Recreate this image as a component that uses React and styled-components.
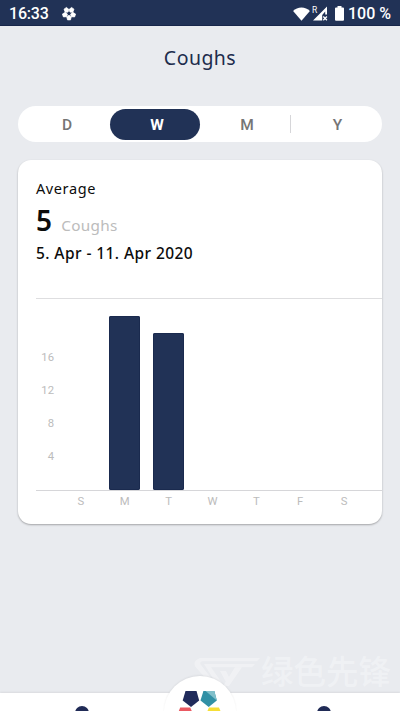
import styled, { createGlobalStyle } from 'styled-components';

const NAVY = '#213256';

const GlobalStyle = createGlobalStyle`
    * {
        box-sizing: border-box;
    }

    body {
        margin: 0;
        background: #e9ebef;
        font-family: Roboto, sans-serif;
    }
`;

const Screen = styled.div`
    display: flex;
    flex-direction: column;
    width: 400px;
    height: 711px;
    overflow: hidden;
    background: #e9ebef;
`;

const StatusBar = styled.header`
    display: flex;
    align-items: center;
    flex: none;
    height: 26px;
    padding: 2px 9px 0;
    background: ${NAVY};
    border-bottom: 1px solid #17264a;
    color: #fff;
    font-size: 16px;
    font-weight: 500;

    svg {
        display: block;
        flex: none;
    }
`;

const Clock = styled.span`
    margin-right: 12px;
    letter-spacing: -0.2px;
`;

const StatusIcons = styled.div`
    display: flex;
    align-items: center;
    margin-left: auto;
    margin-right: 4px;

    svg + svg {
        margin-left: 3px;
    }

    svg:last-child {
        margin-left: 7px;
    }
`;

const Title = styled.h1`
    flex: none;
    height: 80px;
    margin: 0;
    padding-top: 18px;
    color: #202b4c;
    font: 400 19.5px/28px 'Noto Sans', sans-serif;
    letter-spacing: 0.45px;
    text-align: center;
`;

const Segments = styled.nav`
    display: grid;
    grid-template-columns: repeat(4, 90px);
    justify-content: center;
    align-items: center;
    flex: none;
    height: 36px;
    margin: 0 18px;
    border-radius: 18px;
    background: #fff;
`;

const Segment = styled.button`
    height: 31px;
    padding: 1px 0 0 4px;
    border: 0;
    border-radius: 15.5px;
    background: ${({ $active }) => ($active ? NAVY : 'transparent')};
    color: ${({ $active }) => ($active ? '#fff' : '#757575')};
    font: ${({ $active }) => ($active ? 700 : 500)} 15.5px Roboto, sans-serif;
`;

const LastSegment = styled(Segment)`
    height: 18px;
    padding-top: 2px;
    border-left: 1px solid #d6d6d9;
    border-radius: 0;
    line-height: 16px;
`;

const Card = styled.section`
    display: flex;
    flex-direction: column;
    flex: none;
    height: 364px;
    margin: 18px 18px 0;
    padding-left: 18px;
    border-radius: 13px;
    background: #fff;
    box-shadow: 0 1px 2px rgba(0, 0, 0, 0.3);
`;

const Summary = styled.div`
    display: flex;
    flex-direction: column;
    flex: none;
    height: 138px;
    padding-top: 17px;
    color: #0c0c0c;
    font-family: 'Noto Sans', sans-serif;
`;

const Label = styled.div`
    font-size: 14.5px;
    line-height: 22px;
    letter-spacing: 0.6px;
`;

const Average = styled.div`
    display: flex;
    align-items: baseline;
    gap: 9px;
    height: 43px;
    line-height: 43px;
    letter-spacing: 0.3px;

    strong {
        font-size: 28px;
        font-weight: 600;
    }

    span {
        color: #bcbcbc;
        font-size: 15.3px;
    }
`;

const Period = styled.div`
    font-size: 15.5px;
    font-weight: 500;
    line-height: 22px;
    letter-spacing: 0.42px;
`;

const Chart = styled.div`
    display: grid;
    grid-template-columns: 23px 307px;
    grid-template-rows: 191px 1px 21px;
    border-top: 1px solid #dedee0;
    color: #bcbcbc;
    font-size: 11.3px;
`;

const Scale = styled.div`
    display: flex;
    flex-direction: column;
    justify-content: flex-end;
    width: 18px;
    padding-bottom: 17px;
    text-align: right;

    span {
        height: 33.1px;
        line-height: 33.1px;
    }
`;

const Plot = styled.div`
    display: grid;
    grid-template-columns: repeat(7, 1fr);
    align-items: end;
    justify-items: center;
`;

const Bar = styled.div`
    width: 31px;
    border-radius: 2px;
    background: ${NAVY};
    box-shadow: ${({ $empty }) => ($empty ? 'none' : 'inset 0 0 0 1px #1a2a4e')};
`;

const Axis = styled.div`
    grid-column: 1 / -1;
    width: 346px;
    height: 1px;
    background: #d6d6d9;
`;

const Days = styled(Plot)`
    grid-column: 2;
    align-items: center;
`;

const Footer = styled.footer`
    position: relative;
    display: grid;
    grid-template-columns: 1fr 1fr;
    align-items: end;
    height: 18px;
    margin-top: auto;
    background: #fff;
    box-shadow: 0 -1px 2px rgba(0, 0, 0, 0.07);
`;

const TabIcon = styled.svg`
    display: block;
    width: 16px;
    height: 5px;
    margin-left: ${({ $offset }) => $offset}px;
`;

/* The round button rises over the top edge of the tab bar. */
const HomeButton = styled.div`
    position: absolute;
    left: 164px;
    top: -17px;
    width: 72px;
    height: 72px;
    border-radius: 50%;
    background: #fff;
    box-shadow: 0 -1px 2px rgba(0, 0, 0, 0.06);

    svg {
        display: block;
    }
`;

const Watermark = styled.div`
    position: absolute;
    left: 193px;
    top: -36px;
    display: flex;
    align-items: flex-start;
    color: rgba(255, 255, 255, 0.33);
    font: 500 32.5px/30px 'Noto Sans CJK SC', sans-serif;

    svg {
        flex: none;
        margin-right: 1px;
    }

    span {
        margin-top: -2px;
        white-space: nowrap;
    }
`;

const petals = [0, 72, 144, 216, 288];

const FlowerIcon = () => (
    <svg width='16' height='15' viewBox='0 0 16 15' fill='#fff'>
        {petals.map((angle) => (
            <path
                key={angle}
                d='M8 9.2l2.3 1.5-.8 3.2h-3l-.8-3.2z'
                stroke='#fff'
                strokeWidth='0.7'
                strokeLinejoin='round'
                transform={`rotate(${angle} 8 7.5)`}
            />
        ))}
    </svg>
);

const WifiIcon = () => (
    <svg width='17' height='14' viewBox='0 0 18 15' fill='#fff'>
        <path d='M0 4.2C4.5-.8 13.5-.8 18 4.2L9 14.8z' />
    </svg>
);

const SignalIcon = () => (
    <svg width='15' height='15' viewBox='0 0 15 15' overflow='visible'>
        <path d='M0 14.5L14 .5v8h-1.8V5.6L9.2 8.9v5.6z' fill='#fff' />
        <path d='M10.3 10.5l3.6 3.8m0-3.8l-3.6 3.8' stroke='#fff' strokeWidth='1.3' />
        <text x='-1' y='6.5' fill='#fff' fontSize='8.5' fontWeight='400' fontFamily='Roboto, sans-serif'>
            R
        </text>
    </svg>
);

const BatteryIcon = () => (
    <svg width='9' height='15' viewBox='0 0 9 15' fill='#fff'>
        <path d='M2.5 0h4v1.6H8q1 0 1 1v11.2q0 1-1 1H1q-1 0-1-1V2.6q0-1 1-1h1.5z' />
    </svg>
);

const HomeLogo = () => (
    <svg width='72' height='36' viewBox='0 0 72 36'>
        <path d='M21.5 15h11l2.7 9.5L27 31l-8.3-6.5z' fill='#202b5b' />
        <path d='M39.4 15h11l2.4 9.5-8.1 6.5-8.2-6.5z' fill='#3190a5' />
        <path d='M41.6 15h8.8l2.4 9.5z' fill='#80bfca' />
        <path d='M16.2 31.5h10l2 4.5H14.4z' fill='#ea5962' />
        <path d='M45 31.5h10l1.9 4.5H43z' fill='#f6de36' />
    </svg>
);

const WatermarkLogo = () => (
    <svg width='67' height='31' viewBox='0 0 67 31' fill='currentColor'>
        <path d='M7 1h60l-3 3.2H9.5q-3 0-2 3L18 21l-3 3L2.5 10Q-1 4 7 1z' />
        <path d='M11 7h51l-3 3.2H18L31 29h-6z' />
        <path d='M27 14h6l4 8-3 5zM42 10.2h7L36 29h-6z' />
    </svg>
);

const days = ['S', 'M', 'T', 'W', 'T', 'F', 'S'];
const coughs = [0, 21, 19, 0, 0, 0, 0];
const PX_PER_COUGH = 8.29;

const CoughChart = () => (
    <Chart>
        <Scale>
            {[16, 12, 8, 4].map((value) => (
                <span key={value}>{value}</span>
            ))}
        </Scale>
        <Plot>
            {coughs.map((count, index) => (
                <Bar key={index} $empty={!count} style={{ height: count * PX_PER_COUGH }} />
            ))}
        </Plot>
        <Axis />
        <Days>
            {days.map((day, index) => (
                <span key={index}>{day}</span>
            ))}
        </Days>
    </Chart>
);

export default function App() {
    return (
        <Screen>
            <GlobalStyle />
            <StatusBar>
                <Clock>16:33</Clock>
                <FlowerIcon />
                <StatusIcons>
                    <WifiIcon />
                    <SignalIcon />
                    <BatteryIcon />
                </StatusIcons>
                <span>100 %</span>
            </StatusBar>
            <Title>Coughs</Title>
            <Segments>
                <Segment>D</Segment>
                <Segment $active>W</Segment>
                <Segment>M</Segment>
                <LastSegment>Y</LastSegment>
            </Segments>
            <Card>
                <Summary>
                    <Label>Average</Label>
                    <Average>
                        <strong>5</strong>
                        <span>Coughs</span>
                    </Average>
                    <Period>5. Apr - 11. Apr 2020</Period>
                </Summary>
                <CoughChart />
            </Card>
            <Footer>
                <Watermark>
                    <WatermarkLogo />
                    <span>绿色先锋</span>
                </Watermark>
                <TabIcon viewBox='0 0 16 5' $offset={74}>
                    <circle cx='8' cy='7' r='7' fill='#202b56' />
                </TabIcon>
                <TabIcon viewBox='0 0 16 5' $offset={116}>
                    <circle cx='8' cy='7' r='7' fill='#202b56' />
                </TabIcon>
                <HomeButton>
                    <HomeLogo />
                </HomeButton>
            </Footer>
        </Screen>
    );
}
